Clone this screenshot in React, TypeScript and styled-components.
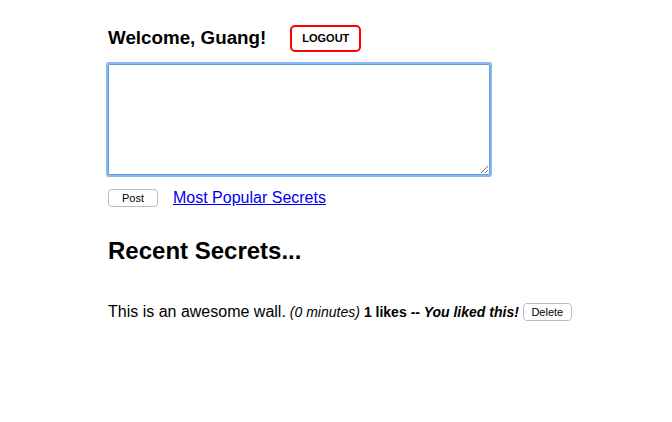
import React from "react";
import styled, { createGlobalStyle } from "styled-components";

const Global = createGlobalStyle`
  html, body { margin: 0; padding: 0; background: #fff; }
  body { font-family: "Liberation Sans", Arial, sans-serif; color: #000; }
`;

const Page = styled.div`
  padding: 24px 0 0 108px;
  width: 564px;
`;

const Header = styled.div`
  display: flex;
  align-items: center;
  gap: 24px;
  height: 28px;
`;

const Welcome = styled.h3`
  margin: 0;
  font-size: 18.8px;
  font-weight: bold;
`;

const LogoutButton = styled.button`
  font-family: "Liberation Sans", Arial, sans-serif;
  font-size: 11px;
  font-weight: bold;
  color: #000;
  background: #fff;
  border: 2px solid #f00;
  border-radius: 5px;
  width: 71px;
  height: 27px;
  padding: 0;
`;

const Form = styled.form`
  margin-top: 11px;
  display: flex;
  flex-direction: column;
`;

const TextArea = styled.textarea`
  box-sizing: border-box;
  width: 382px;
  height: 111px;
  margin: 1px 0 0 0;
  border: 1px solid #5b9dd9;
  outline: 2px solid #8ab8f5;
  outline-offset: 0;
  border-radius: 1px;
  resize: both;
  font-family: "Liberation Mono", monospace;
`;

const Actions = styled.div`
  display: flex;
  align-items: center;
  gap: 15px;
  margin-top: 14px;
`;

const SmallButton = styled.button<{ $w: number }>`
  font-family: "Liberation Sans", Arial, sans-serif;
  font-size: 11px;
  color: #000;
  background: #fff;
  border: 1px solid #bcbcbc;
  border-radius: 4px;
  height: 18px;
  padding: 0;
  width: ${(p) => p.$w}px;
  line-height: 16px;
`;

const Link = styled.a`
  font-size: 16px;
  color: #0000ee;
  text-decoration: underline;
`;

const Title = styled.h2`
  margin: 30px 0 0 0;
  font-size: 24px;
  font-weight: bold;
  line-height: 28px;
`;

const Secret = styled.p`
  margin: 38px 0 0 0;
  font-size: 16px;
  display: flex;
  align-items: center;
  gap: 4px;
  white-space: nowrap;
`;

const Time = styled.em`
  font-size: 14px;
`;

const Likes = styled.b`
  font-size: 14px;
`;

const Liked = styled.b`
  font-size: 14px;
  font-style: italic;
`;

const Dashes = styled.span`
  font-style: normal;
`;

export default function App() {
  return (
    <>
      <Global />
      <Page>
        <Header>
          <Welcome>Welcome, Guang!</Welcome>
          <LogoutButton>LOGOUT</LogoutButton>
        </Header>
        <Form onSubmit={(e) => e.preventDefault()}>
          <TextArea />
          <Actions>
            <SmallButton $w={50}>Post</SmallButton>
            <Link href="#">Most Popular Secrets</Link>
          </Actions>
        </Form>
        <Title>Recent Secrets...</Title>
        <Secret>
          <span>This is an awesome wall.</span>
          <Time>(0 minutes)</Time>
          <Likes>1 likes</Likes>
          <Liked><Dashes>--</Dashes> You liked this!</Liked>
          <SmallButton $w={49}>Delete</SmallButton>
        </Secret>
      </Page>
    </>
  );
}
